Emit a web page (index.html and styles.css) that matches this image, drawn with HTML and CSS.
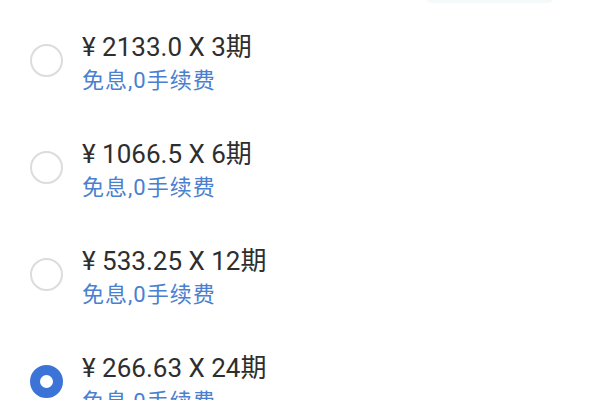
FILE: index.html
```html
<!DOCTYPE html>
<html lang="zh-CN">
<head>
<meta charset="utf-8">
<title>分期</title>
<link rel="stylesheet" href="styles.css">
</head>
<body>
<div class="page">
  <div class="top-tab"></div>
  <ul class="plans">
    <li class="plan">
      <span class="radio"></span>
      <div class="info">
        <div class="amount">¥ 2133.0 X 3期</div>
        <div class="note">免息,0手续费</div>
      </div>
    </li>
    <li class="plan">
      <span class="radio"></span>
      <div class="info">
        <div class="amount">¥ 1066.5 X 6期</div>
        <div class="note">免息,0手续费</div>
      </div>
    </li>
    <li class="plan">
      <span class="radio"></span>
      <div class="info">
        <div class="amount">¥ 533.25 X 12期</div>
        <div class="note">免息,0手续费</div>
      </div>
    </li>
    <li class="plan selected">
      <span class="radio"></span>
      <div class="info">
        <div class="amount">¥ 266.63 X 24期</div>
        <div class="note">免息,0手续费</div>
      </div>
    </li>
  </ul>
</div>
</body>
</html>
```
FILE: styles.css
```css
html, body {
  margin: 0;
  padding: 0;
  background: #ffffff;
}
body {
  width: 600px;
  height: 400px;
  overflow: hidden;
  font-family: Roboto, "Noto Sans CJK SC", sans-serif;
}
.page {
  position: relative;
  height: 400px;
  overflow: hidden;
}
.top-tab {
  position: absolute;
  top: -20px;
  left: 426px;
  width: 128px;
  height: 23px;
  border-radius: 6px;
  background: #f5f9f9;
}
.plans {
  list-style: none;
  margin: 0;
  padding: 10px 0 0 30px;
}
.plan {
  height: 107px;
  display: flex;
  align-items: center;
  gap: 19px;
}
.radio {
  box-sizing: border-box;
  width: 33px;
  height: 33px;
  border-radius: 50%;
  border: 2px solid #dcdcdc;
  flex: none;
  margin-top: -6px;
}
.plan.selected .radio {
  border: 10.5px solid #3b74d6;
}
.info {
  display: flex;
  flex-direction: column;
  gap: 5px;
}
.amount {
  font-size: 26px;
  line-height: 30px;
  color: #2e2e2e;
}
.note {
  font-size: 22px;
  line-height: 28px;
  letter-spacing: 1px;
  color: #4a80cf;
}
```
